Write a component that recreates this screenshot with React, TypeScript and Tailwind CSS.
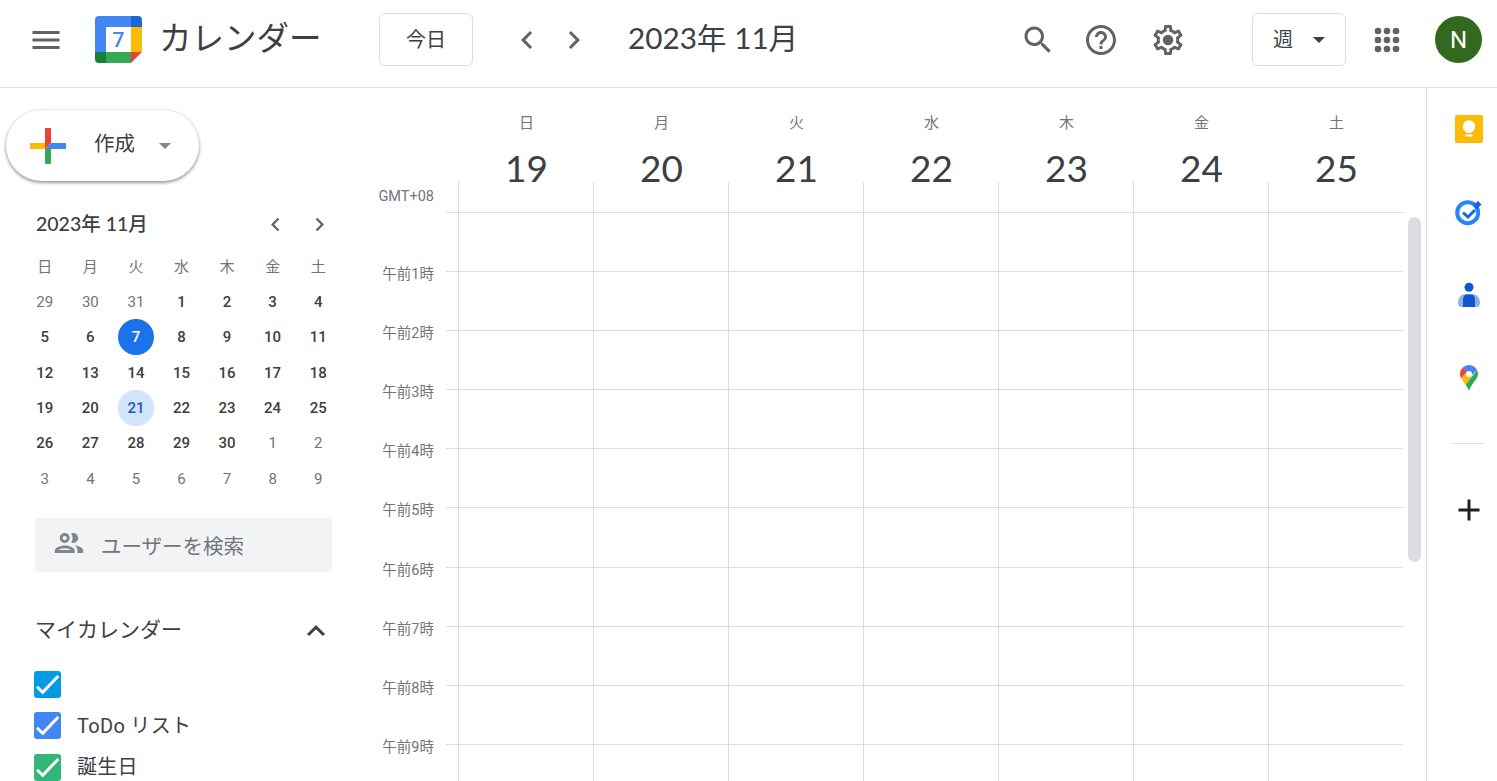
const SANS = "font-['Roboto','Noto_Sans_CJK_JP',sans-serif]";

const DAYS = ["日", "月", "火", "水", "木", "金", "土"];
const WEEK = ["19", "20", "21", "22", "23", "24", "25"];
const HOURS = ["午前1時", "午前2時", "午前3時", "午前4時", "午前5時", "午前6時", "午前7時", "午前8時", "午前9時", ""];
const MINI = [
  [29, 30, 31, 1, 2, 3, 4],
  [5, 6, 7, 8, 9, 10, 11],
  [12, 13, 14, 15, 16, 17, 18],
  [19, 20, 21, 22, 23, 24, 25],
  [26, 27, 28, 29, 30, 1, 2],
  [3, 4, 5, 6, 7, 8, 9],
];

const MENU = "M3 18h18v-2H3v2zm0-5h18v-2H3v2zm0-7v2h18V6H3z";
const LEFT = "M15.41 7.41L14 6l-6 6 6 6 1.41-1.41L10.83 12z";
const RIGHT = "M10 6L8.59 7.41 13.17 12l-4.58 4.59L10 18l6-6z";
const SEARCH = "M15.5 14h-.79l-.28-.27C15.41 12.59 16 11.11 16 9.5 16 5.91 13.09 3 9.5 3S3 5.91 3 9.5 5.91 16 9.5 16c1.61 0 3.09-.59 4.23-1.57l.27.28v.79l5 4.99L20.49 19l-4.99-5zm-6 0C7.01 14 5 11.99 5 9.5S7.01 5 9.5 5 14 7.01 14 9.5 11.99 14 9.5 14z";
const HELP = "M11 18h2v-2h-2v2zm1-16C6.48 2 2 6.48 2 12s4.48 10 10 10 10-4.48 10-10S17.52 2 12 2zm0 18c-4.41 0-8-3.59-8-8s3.59-8 8-8 8 3.59 8 8-3.59 8-8 8zm0-14c-2.21 0-4 1.79-4 4h2c0-1.1.9-2 2-2s2 .9 2 2c0 2-3 1.75-3 5h2c0-2.25 3-2.5 3-5 0-2.21-1.79-4-4-4z";
const GEAR = "M19.43 12.98c.04-.32.07-.64.07-.98 0-.34-.03-.66-.07-.98l2.11-1.65c.19-.15.24-.42.12-.64l-2-3.46c-.09-.16-.26-.25-.44-.25-.06 0-.12.01-.17.03l-2.49 1c-.52-.4-1.08-.73-1.69-.98l-.38-2.65C14.46 2.18 14.25 2 14 2h-4c-.25 0-.46.18-.49.42l-.38 2.65c-.61.25-1.17.59-1.69.98l-2.49-1c-.06-.02-.12-.03-.18-.03-.17 0-.34.09-.43.25l-2 3.46c-.13.22-.07.49.12.64l2.11 1.65c-.04.32-.07.65-.07.98 0 .33.03.66.07.98l-2.11 1.65c-.19.15-.24.42-.12.64l2 3.46c.09.16.26.25.44.25.06 0 .12-.01.17-.03l2.49-1c.52.4 1.08.73 1.69.98l.38 2.65c.03.24.24.42.49.42h4c.25 0 .46-.18.49-.42l.38-2.65c.61-.25 1.17-.59 1.69-.98l2.49 1c.06.02.12.03.18.03.17 0 .34-.09.43-.25l2-3.46c.12-.22.07-.49-.12-.64l-2.11-1.65zm-1.98-1.71c.04.31.05.52.05.73 0 .21-.02.43-.05.73l-.14 1.13.89.7 1.08.84-.7 1.21-1.27-.51-1.04-.42-.9.68c-.43.32-.84.56-1.25.73l-1.06.43-.16 1.13-.2 1.35h-1.4l-.19-1.35-.16-1.13-1.06-.43c-.43-.18-.83-.41-1.23-.71l-.91-.7-1.06.43-1.27.51-.7-1.21 1.08-.84.89-.7-.14-1.13c-.03-.31-.05-.54-.05-.74s.02-.43.05-.73l.14-1.13-.89-.7-1.08-.84.7-1.21 1.27.51 1.04.42.9-.68c.43-.32.84-.56 1.25-.73l1.06-.43.16-1.13.2-1.35h1.39l.19 1.35.16 1.13 1.06.43c.43.18.83.41 1.23.71l.91.7 1.06-.43 1.27-.51.7 1.21-1.07.85-.89.7.14 1.13zM12 8.5a3.5 3.5 0 1 0 0 7 3.5 3.5 0 0 0 0-7z";
const GROUP = "M9 13.75c-2.34 0-7 1.17-7 3.5V19h14v-1.75c0-2.33-4.66-3.5-7-3.5zM4.34 17c.84-.58 2.87-1.25 4.66-1.25s3.82.67 4.66 1.25H4.34zM9 12c1.93 0 3.5-1.57 3.5-3.5S10.93 5 9 5 5.5 6.57 5.5 8.5 7.07 12 9 12zm0-5c.83 0 1.5.67 1.5 1.5S9.83 10 9 10s-1.5-.67-1.5-1.5S8.17 7 9 7zm7.04 6.81c1.16.84 1.96 1.96 1.96 3.44V19h4v-1.75c0-2.02-3.5-3.17-5.96-3.44zM15 12c1.93 0 3.5-1.57 3.5-3.5S16.93 5 15 5c-.54 0-1.04.13-1.5.35.63.89 1 1.98 1 3.15s-.37 2.26-1 3.15c.46.22.96.35 1.5.35z";

const Icon = ({ d, size = 36, className = "" }: { d: string; size?: number; className?: string }) => (
  <svg viewBox="0 0 24 24" width={size} height={size} fill="currentColor" className={`shrink-0 ${className}`}>
    <path d={d} />
  </svg>
);

const CalendarLogo = () => (
  <svg viewBox="0 0 47 47" width="47" height="47" className="shrink-0">
    <path d="M4 0h32v11H11v25H0V4a4 4 0 0 1 4-4z" fill="#4285f4" />
    <path d="M36 0h7a4 4 0 0 1 4 4v7H36z" fill="#1967d2" />
    <rect x="36" y="11" width="11" height="25" fill="#fbbc04" />
    <rect x="11" y="36" width="25" height="11" fill="#34a853" />
    <path d="M0 36h11v11H4a4 4 0 0 1-4-4z" fill="#188038" />
    <path d="M36 36h11L36 47z" fill="#ea4335" />
    <text x="23.5" y="31" textAnchor="middle" fontSize="21" fontWeight="500" fill="#4285f4" fontFamily="Roboto, sans-serif">7</text>
  </svg>
);

const CreatePlus = () => (
  <svg viewBox="0 0 36 36" width="36" height="36" className="shrink-0">
    <path d="M15 0h6v15l-6 6z" fill="#ea4335" />
    <path d="M15 21l6-6h15v6z" fill="#4285f4" />
    <path d="M15 21h6v15h-6z" fill="#34a853" />
    <path d="M0 15h15v6H0z" fill="#fbbc04" />
  </svg>
);

const Caret = ({ className }: { className: string }) => (
  <svg viewBox="0 0 12 6" width="12" height="6" fill="currentColor" className={`shrink-0 ${className}`}>
    <path d="M0 0h12L6 6z" />
  </svg>
);

const AppsGrid = () => (
  <svg viewBox="0 0 24 24" width="36" height="36" fill="#5f6368" className="shrink-0">
    {[6, 12, 18].flatMap((y) =>
      [6, 12, 18].map((x) => <circle key={`${x}-${y}`} cx={x} cy={y} r="2.2" />)
    )}
  </svg>
);

const Header = () => (
  <header className="flex h-[88px] shrink-0 items-center border-b border-[#dadce0] pb-[8px]">
    <div className="flex w-[379px] shrink-0 items-center">
      <Icon d={MENU} className="ml-[28px] text-[#5f6368]" />
      <div className="ml-[31px]">
        <CalendarLogo />
      </div>
      <span className="ml-[17px] text-[32.5px] leading-none text-[#3c4043]">カレンダー</span>
    </div>
    <button className="h-[53px] w-[94px] shrink-0 rounded-[6px] border border-[#dadce0] text-[20px] text-[#3c4043]">今日</button>
    <Icon d={LEFT} className="ml-[36px] text-[#5f6368]" />
    <Icon d={RIGHT} className="ml-[11px] text-[#5f6368]" />
    <span className="mb-[3px] ml-[36px] font-['Lato','Noto_Sans_CJK_JP',sans-serif] text-[29.7px] leading-none text-[#3c4043]">2023年 11月</span>
    <div className="ml-auto flex items-center pr-[15px]">
      <Icon d={SEARCH} className="text-[#5f6368]" />
      <Icon d={HELP} className="ml-[27px] text-[#5f6368]" />
      <Icon d={GEAR} className="ml-[31px] text-[#5f6368]" />
      <button className="ml-[66px] flex h-[53px] w-[94px] shrink-0 items-center rounded-[6px] border border-[#dadce0] pl-[20px] text-[20px] text-[#3c4043]">
        週
        <Caret className="ml-[20px] text-[#3c4043]" />
      </button>
      <div className="ml-[23px]">
        <AppsGrid />
      </div>
      <div className="ml-[30px] flex h-[47px] w-[47px] shrink-0 items-center justify-center rounded-full bg-[#33691e] text-[24px] text-white">N</div>
    </div>
  </header>
);

const MiniCalendar = () => (
  <div className="ml-[22px] mt-[7px] grid w-[319px] auto-rows-[35.4px] grid-cols-7">
    {DAYS.map((d) => (
      <div key={d} className="flex items-center justify-center pt-[2px] text-[15px] text-[#70757a]">{d}</div>
    ))}
    {MINI.flatMap((week, r) =>
      week.map((n, c) => {
        const muted = (r === 0 && n > 20) || (r >= 4 && n < 20);
        const today = r === 1 && n === 7;
        const picked = r === 3 && n === 21;
        return (
          <div key={`${r}-${c}`} className="flex items-center justify-center">
            <span
              className={`flex h-[36px] w-[36px] items-center justify-center rounded-full text-[15px] ${
                today
                  ? "bg-[#1a73e8] font-medium text-white"
                  : picked
                    ? "bg-[#d2e3fc] font-medium text-[#185abc]"
                    : muted
                      ? "text-[#70757a]"
                      : "font-medium text-[#3c4043]"
              }`}
            >
              {n}
            </span>
          </div>
        );
      })
    )}
  </div>
);

const CheckRow = ({ color, label }: { color: string; label?: string }) => (
  <div className="flex h-[41.5px] items-center pl-[34px]">
    <span className={`flex h-[27px] w-[27px] shrink-0 items-center justify-center rounded-[3px] ${color}`}>
      <svg viewBox="0 0 27 27" width="27" height="27" fill="none" stroke="white" strokeWidth="3">
        <path d="M3 15.7l5.7 5.6L24.3 5" />
      </svg>
    </span>
    {label && <span className="ml-[16px] text-[20px] tracking-[0.3px] text-[#3c4043]">{label}</span>}
  </div>
);

const Sidebar = () => (
  <aside className="w-[377px] shrink-0">
    <button className="ml-[6px] mt-[22px] flex h-[71px] w-[193px] items-center rounded-full bg-white pl-[24px] shadow-[0_1px_3px_1px_rgba(60,64,67,0.2),0_2px_3px_0_rgba(60,64,67,0.35)]">
      <CreatePlus />
      <span className="mb-[2px] ml-[28px] text-[20.5px] text-[#3c4043]">作成</span>
      <Caret className="ml-[24px] text-[#80868b]" />
    </button>

    <div className="ml-[36px] mt-[25px] flex h-[36px] w-[301px] items-center">
      <span className="font-['Lato','Noto_Sans_CJK_JP',sans-serif] text-[19.5px] font-medium text-[#3c4043]">2023年 11月</span>
      <Icon d={LEFT} size={27} className="ml-auto text-[#5f6368]" />
      <Icon d={RIGHT} size={27} className="ml-[17px] mr-[4.5px] text-[#5f6368]" />
    </div>

    <MiniCalendar />

    <div className="ml-[35px] mt-[21px] flex h-[54px] w-[297px] items-center rounded-[4px] bg-[#f1f3f4] pl-[17px] text-[#70757a]">
      <Icon d={GROUP} size={34} className="mb-[3px] text-[#80868b]" />
      <span className="ml-[15px] pt-[6px] text-[20.5px]">ユーザーを検索</span>
    </div>

    <div className="ml-[35px] mt-[39px] flex h-[40px] w-[297px] items-center">
      <span className="text-[21px] text-[#3c4043]">マイカレンダー</span>
      <svg viewBox="0 0 24 24" width="36" height="36" fill="#3c4043" className="ml-auto mr-[-2px] shrink-0">
        <path d="M7.41 15.41L12 10.83l4.59 4.58L18 14l-6-6-6 6z" />
      </svg>
    </div>

    <div className="mt-[13px]">
      <CheckRow color="bg-[#039be5]" />
      <CheckRow color="bg-[#4285f4]" label="ToDo リスト" />
      <CheckRow color="bg-[#33b679]" label="誕生日" />
    </div>
  </aside>
);

const WeekHeader = () => (
  <div className="flex h-[125px] shrink-0">
    <div className="flex w-[69px] shrink-0 flex-col justify-end pb-[6px]">
      <span className="w-[57px] whitespace-nowrap text-right text-[14.5px] leading-[20px] text-[#70757a]">GMT+08</span>
    </div>
    <div className="flex flex-1 border-b border-[#dadce0]">
      <div className="w-[12px] shrink-0" />
      {WEEK.map((n, i) => (
        <div key={n} className="flex flex-1 flex-col items-center">
          <span className="ml-[2px] flex h-[60px] items-start justify-center pt-[25px] text-[15px] leading-[20px] text-[#70757a]">{DAYS[i]}</span>
          <span className="ml-[2px] h-[34px] font-['Lato',sans-serif] text-[37px] leading-[40px] text-[#3c4043]">{n}</span>
          <div className="h-[30px] w-full border-l border-[#dadce0]" />
        </div>
      ))}
    </div>
  </div>
);

const HourRow = ({ label, tall }: { label: string; tall: boolean }) => (
  <div className={`flex shrink-0 ${tall ? "h-[60px]" : "h-[59px]"}`}>
    <div className="flex w-[69px] shrink-0 items-end">
      <span className="-mb-[13px] w-[57px] whitespace-nowrap text-right text-[14.5px] leading-[20px] text-[#70757a]">{label}</span>
    </div>
    <div className="flex flex-1 border-b border-[#dadce0]">
      <div className="w-[12px] shrink-0" />
      {DAYS.map((d) => (
        <div key={d} className="flex-1 border-l border-[#dadce0]" />
      ))}
    </div>
  </div>
);

const SidePanel = () => (
  <aside className="flex w-[71px] shrink-0 flex-col border-l border-[#dadce0] pl-[28px]">
    <svg viewBox="0 0 28 28" width="28" height="28" className="mt-[27px] shrink-0">
      <rect width="28" height="28" rx="2" fill="#fbbc04" />
      <circle cx="14" cy="11.5" r="6.2" fill="white" />
      <rect x="11.5" y="15" width="5" height="3" fill="white" />
      <rect x="10.5" y="19.5" width="7" height="2" fill="white" />
    </svg>
    <svg viewBox="0 0 28 28" width="28" height="28" className="mt-[56px] shrink-0">
      <circle cx="12.7" cy="13.7" r="10.5" fill="none" stroke="#2684fc" strokeWidth="4" />
      <path d="M18 6.5l5-4.500 3.500 3.500-5 5z" fill="#1a66e0" />
      <path d="M8 13.700l5 4.300 7-7" fill="none" stroke="#1a66e0" strokeWidth="3" />
    </svg>
    <svg viewBox="0 0 28 28" width="28" height="28" className="mt-[54px] shrink-0">
      <circle cx="14" cy="6.3" r="4.5" fill="#0f56cc" />
      <path d="M3 22c0-5 3-9 8-9h6c5 0 8 4 8 9 0 2.500-1.500 4-4 4H7c-2.500 0-4-1.500-4-4z" fill="#8ab0ee" />
      <path d="M8 26v-8c0-2.500 2-4.500 4-4.500h4c2 0 4 2 4 4.500v8z" fill="#0f56cc" />
    </svg>
    <svg viewBox="0 0 28 28" width="28" height="28" className="mt-[56px] shrink-0">
      <path d="M7.6 2.700A9 9 0 0 1 22 5l-6 6-2-5-2.500 1z" fill="#4285f4" />
      <path d="M7.6 2.700A9 9 0 0 0 5 9c0 1.600.5 3 1.200 4.300L12 7z" fill="#ea4335" />
      <path d="M6.200 13.300c1.300 2.200 3 4.200 4.400 6.400L17 11l-6-3z" fill="#fbbc04" />
      <path d="M22 5a9 9 0 0 1 1 4c0 5.500-6.500 9-9 17-.6-2.400-2-4.400-3.400-6.300z" fill="#34a853" />
      <circle cx="14" cy="9" r="3" fill="white" />
    </svg>
    <div className="ml-[-2px] mt-[50px] h-px w-[31px] shrink-0 bg-[#dadce0]" />
    <Icon d="M19 13h-6v6h-2v-6H5v-2h6V5h2v6h6v2z" className="ml-[-4px] mt-[48px] text-[#202124]" />
  </aside>
);

export default function App() {
  return (
    <div className={`flex h-screen flex-col overflow-hidden bg-white ${SANS}`}>
      <Header />
      <div className="flex min-h-0 flex-1">
        <Sidebar />
        <main className="flex w-[1026px] shrink-0 flex-col">
          <WeekHeader />
          {HOURS.map((h, i) => (
            <HourRow key={i} label={h} tall={i === 5} />
          ))}
        </main>
        <div className="w-[23px] shrink-0 pl-[5px] pt-[129px]">
          <div className="h-[345px] w-[13px] rounded-full bg-[#dadce0]" />
        </div>
        <SidePanel />
      </div>
    </div>
  );
}
